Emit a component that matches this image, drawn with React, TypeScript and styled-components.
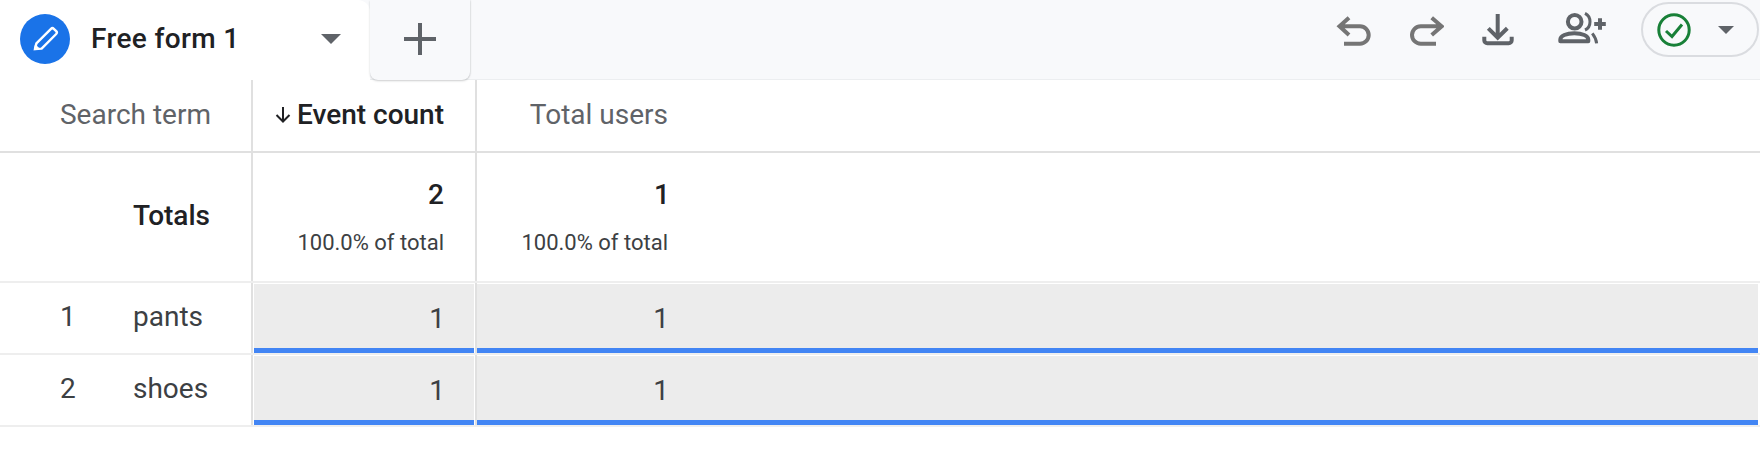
import React from 'react';
import styled, { createGlobalStyle } from 'styled-components';

const Global = createGlobalStyle`
  html, body { margin: 0; padding: 0; background: #fff; }
  body { font-family: Roboto, "Liberation Sans", sans-serif; color: #202124; }
`;

const Page = styled.div`
  width: 1760px;
  height: 474px;
  overflow: hidden;
  background: #fff;
`;

const TabBar = styled.div`
  display: flex;
  align-items: stretch;
  height: 80px;
  background: #f8f9fb;
  box-shadow: inset 0 -1px 0 #eceef0;
`;

const ActiveTab = styled.div`
  width: 370px;
  display: flex;
  align-items: center;
  padding: 0 29px 2px 20px;
  box-sizing: border-box;
  background: #fff;
  border-radius: 0 12px 0 0;
`;

const TabBadge = styled.span`
  width: 50px;
  height: 50px;
  border-radius: 50%;
  background: #1a73e8;
  display: flex;
  flex: none;
`;

const TabTitle = styled.span`
  flex: 1;
  margin-left: 21px;
  font-size: 28px;
  letter-spacing: 0.35px;
  font-weight: 500;
  line-height: 32px;
  color: #202124;
`;

const Caret = styled.span<{ $w: number }>`
  width: 0;
  height: 0;
  flex: none;
  border-left: ${(p) => p.$w / 2}px solid transparent;
  border-right: ${(p) => p.$w / 2}px solid transparent;
  border-top: ${(p) => p.$w / 2}px solid #5f6368;
`;

const AddTab = styled.div`
  width: 100px;
  display: flex;
  align-items: center;
  justify-content: center;
  background: #f8f9fb;
  border-radius: 0 0 8px 8px;
  box-shadow: 0 1px 2px rgba(60, 64, 67, 0.25), 1px 0 1px rgba(60, 64, 67, 0.06);
  padding-bottom: 2px;
  box-sizing: border-box;
`;

const Actions = styled.div`
  margin-left: auto;
  display: flex;
  align-items: flex-start;
  padding: 2px 1px 0 0;
`;

const ActionIcon = styled.svg<{ $gap: number; $soft?: boolean }>`
  display: block;
  flex: none;
  color: ${(p) => (p.$soft ? '#757575' : '#5f6368')};
  margin: 10px ${(p) => p.$gap}px 0 0;
`;

const StatusPill = styled.div`
  width: 118px;
  height: 55px;
  box-sizing: border-box;
  border: 2px solid #dadce0;
  border-radius: 28px;
  display: flex;
  align-items: center;
  padding: 0 23px 0 14px;
  justify-content: space-between;
`;

const Table = styled.div`
  display: flex;
  flex-direction: column;
`;

const Row = styled.div<{ $h: number; $line: string }>`
  display: grid;
  grid-template-columns: 251px 224px 1fr;
  height: ${(p) => p.$h}px;
  border-bottom: 2px solid ${(p) => p.$line};
  box-sizing: border-box;
`;

const LabelCell = styled.div`
  display: flex;
  align-items: center;
  font-size: 28px;
  color: #3c4043;
`;

const TermCell = styled(LabelCell)`
  padding-bottom: 4px;
`;

const Rank = styled.span`
  width: 60px;
  margin-left: 60px;
  margin-right: 13px;
`;

const HeadLabel = styled.span`
  width: 251px;
  text-align: right;
  padding: 0 40px 2px 0;
  box-sizing: border-box;
  color: #5f6368;
`;

const TotalsLabel = styled.span`
  margin: 0 0 3px 133px;
  font-weight: 500;
  color: #202124;
`;

const NumCell = styled.div`
  border-left: 2px solid #e0e0e0;
  display: flex;
  flex-direction: column;
  justify-content: center;
  align-items: flex-start;
  min-width: 0;
`;

const RightBlock = styled.div`
  width: 191px;
  text-align: right;
`;

const HeadValue = styled.span<{ $active?: boolean }>`
  font-size: 28px;
  line-height: 32px;
  font-weight: ${(p) => (p.$active ? 500 : 400)};
  color: ${(p) => (p.$active ? '#202124' : '#5f6368')};
  display: inline-flex;
  align-items: center;
  gap: 6px;
  padding-bottom: 2px;
`;

const TotalNum = styled.div<{ $nudge?: number }>`
  font-size: 28px;
  font-weight: 500;
  line-height: 32px;
  color: #202124;
  margin: 0 ${(p) => -(p.$nudge ?? 0)}px 19px 0;
`;

const TotalPct = styled.div`
  font-size: 22px;
  line-height: 26px;
  color: #3c4043;
`;

const BarCell = styled.div`
  border-left: 2px solid #e0e0e0;
  padding: 1px 0 0 0;
  min-width: 0;
`;

const Bar = styled.div<{ $left: number; $right: number }>`
  height: 69px;
  box-sizing: border-box;
  background: #ececec;
  border-bottom: 5px solid #4285f4;
  display: flex;
  align-items: center;
  margin: 0 ${(p) => p.$right}px 0 ${(p) => p.$left}px;
`;

const BarValue = styled.span<{ $w: number }>`
  width: ${(p) => p.$w}px;
  padding-top: 4px;
  text-align: right;
  font-size: 28px;
  color: #3c4043;
`;

const rows = [
  ['1', 'pants'],
  ['2', 'shoes'],
];

export default function App() {
  return (
    <Page>
      <Global />
      <TabBar>
        <ActiveTab>
          <TabBadge>
            <svg width="50" height="50" viewBox="0 0 50 50" fill="none">
              <path d="M15 35l1.400-5.600L31 14.800a2 2 0 012.800 0l2.400 2.400a2 2 0 010 2.800L21.600 34.600z" stroke="#fff" strokeWidth="2.4" strokeLinejoin="round" />
              <path d="M13.500 36.500l1.600-6.600 5 5z" fill="#fff" />
            </svg>
          </TabBadge>
          <TabTitle>Free form 1</TabTitle>
          <Caret $w={20} />
        </ActiveTab>
        <AddTab>
          <svg width="32" height="32" viewBox="0 0 32 32">
            <path d="M16 0v32M0 16h32" stroke="#5f6368" strokeWidth="4" />
          </svg>
        </AddTab>
        <Actions>
          <ActionIcon $gap={36} $soft width="36" height="36" viewBox="0 0 36 36" fill="none">
            <path d="M13 5.700L3.500 14.300 13 23M3.500 14.300H24a8.700 8.700 0 010 17.400H8" stroke="currentColor" strokeWidth="4" />
          </ActionIcon>
          <ActionIcon $gap={36} $soft width="36" height="36" viewBox="0 0 36 36" fill="none">
            <path d="M23.700 5.700l10 8.600-10 8.700M33.700 14.300h-21a8.700 8.700 0 000 17.400H28" stroke="currentColor" strokeWidth="4" />
          </ActionIcon>
          <ActionIcon $gap={40} width="36" height="36" viewBox="0 0 36 36" fill="none">
            <path d="M17.700 2v24M8.300 16.300l9.400 9.400 9.600-9.400M4.300 24.700v3.600a3 3 0 003 3h21.400a3 3 0 003-3v-3.600" stroke="currentColor" strokeWidth="4" />
          </ActionIcon>
          <ActionIcon $gap={33} width="52" height="36" viewBox="0 0 52 36" fill="none">
            <circle cx="18.700" cy="9.700" r="6.800" stroke="currentColor" strokeWidth="4" />
            <path d="M4.300 29.300v-1.500c0-4 6-6.500 14-6.500s14 2.500 14 6.500v1.500z" stroke="currentColor" strokeWidth="4" strokeLinejoin="round" />
            <path d="M29 1.300c3 1.500 5 4.500 5 8.400s-2 7-5 8.300M36.300 21.300c2 2.600 4 6 4.300 10" stroke="currentColor" strokeWidth="3" />
            <path d="M44 6.200v11.600M38.200 12h11.600" stroke="currentColor" strokeWidth="4" />
          </ActionIcon>
          <StatusPill>
            <svg width="34" height="34" viewBox="0 0 34 34" fill="none">
              <circle cx="17" cy="17" r="15.200" stroke="#188038" strokeWidth="3" />
              <path d="M9 18l6 5.500L25 11.500" stroke="#188038" strokeWidth="3" />
            </svg>
            <Caret $w={16} />
          </StatusPill>
        </Actions>
      </TabBar>
      <Table>
        <Row $h={73} $line="#e0e0e0">
          <LabelCell><HeadLabel>Search term</HeadLabel></LabelCell>
          <NumCell>
            <RightBlock>
              <HeadValue $active>
                <svg width="16" height="17" viewBox="0 0 16 17" fill="none">
                  <path d="M8 1v14.500M1.500 9L8 15.500 14.500 9" stroke="#202124" strokeWidth="2" />
                </svg>
                Event count
              </HeadValue>
            </RightBlock>
          </NumCell>
          <NumCell>
            <RightBlock>
              <HeadValue>Total users</HeadValue>
            </RightBlock>
          </NumCell>
        </Row>
        <Row $h={130} $line="#eeeeee">
          <LabelCell><TotalsLabel>Totals</TotalsLabel></LabelCell>
          <NumCell>
            <RightBlock>
              <TotalNum>2</TotalNum>
              <TotalPct>100.0% of total</TotalPct>
            </RightBlock>
          </NumCell>
          <NumCell>
            <RightBlock>
              <TotalNum $nudge={2}>1</TotalNum>
              <TotalPct>100.0% of total</TotalPct>
            </RightBlock>
          </NumCell>
        </Row>
        {rows.map(([n, term]) => (
          <Row key={n} $h={72} $line="#eeeeee">
            <TermCell>
              <Rank>{n}</Rank>
              {term}
            </TermCell>
            <BarCell>
              <Bar $left={1} $right={1}><BarValue $w={191}>1</BarValue></Bar>
            </BarCell>
            <BarCell>
              <Bar $left={0} $right={2}><BarValue $w={192}>1</BarValue></Bar>
            </BarCell>
          </Row>
        ))}
      </Table>
    </Page>
  );
}
